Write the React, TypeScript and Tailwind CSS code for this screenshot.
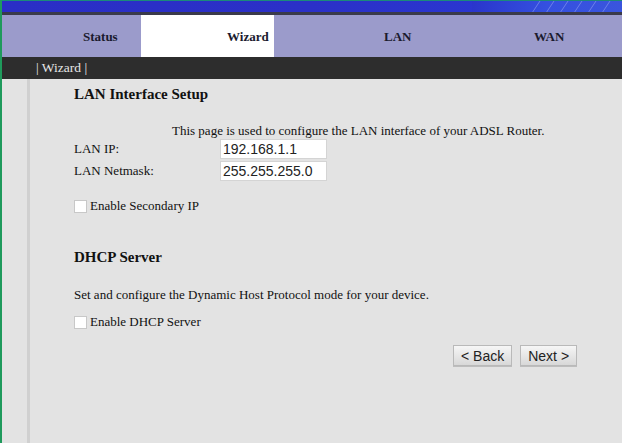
const tabs = [
  { label: 'Status', w: 'w-[139px]', pl: 'pl-[81px]', active: false },
  { label: 'Wizard', w: 'w-[133px]', pl: 'pl-[86px]', active: true },
  { label: 'LAN', w: 'w-[152px]', pl: 'pl-[110px]', active: false },
  { label: 'WAN', w: 'flex-1', pl: 'pl-[108px]', active: false },
];

const Checkbox = ({ label }: { label: string }) => (
  <label className="flex items-center h-[14px] text-[13px] text-[#111] font-['Liberation_Serif',serif]">
    <span className="w-[13px] h-[13px] bg-white border border-[#c8c8c8] mr-[3px]" />
    {label}
  </label>
);

const Field = ({ label, value }: { label: string; value: string }) => (
  <div className="flex items-center h-[22px]">
    <span className="w-[146px] text-[13px] text-[#111] font-['Liberation_Serif',serif]">{label}</span>
    <div className="w-[107px] h-[20px] bg-white border border-[#d4d4d4] pl-[2px] flex items-center text-[14px] text-[#222] font-['Liberation_Sans',Arial,sans-serif]">
      {value}
    </div>
  </div>
);

const Button = ({ children }: { children: string }) => (
  <button className="h-[21px] px-[7px] text-[14px] text-[#222] border border-[#b9b9b9] bg-gradient-to-b from-[#f6f6f6] to-[#d8d8d8] shadow-[0_1px_0_#bdbdbd] font-['Liberation_Sans',Arial,sans-serif]">
    {children}
  </button>
);

export default function App() {
  return (
    <div className="w-[622px] h-[443px] overflow-hidden bg-[#e3e3e3] border-l-2 border-[#1f9a5c] flex flex-col font-['Liberation_Serif',serif]">
      {/* top banner */}
      <div className="h-[12px] border-t border-[#1b8a7a] bg-gradient-to-r from-[#2a2ec6] via-[#2b30c8] to-[#2a3bd8] relative overflow-hidden">
        <div className="absolute right-0 top-0 h-full w-[150px] bg-gradient-to-r from-[#2a35cc] via-[#3550e0] to-[#3a55dd]" />
        <svg className="absolute right-0 top-0" width="100" height="12" viewBox="0 0 100 12">
          {[10, 24, 38, 52, 66, 80].map((x) => (
            <line key={x} x1={x} y1="12" x2={x + 8} y2="0" stroke="#8fa0f0" strokeWidth="1" opacity="0.6" />
          ))}
        </svg>
      </div>
      <div className="h-[3px] bg-[#3a3a4a]" />

      {/* tabs */}
      <div className="h-[42px] flex bg-[#9b9bcb]">
        {tabs.map((t) => (
          <div
            key={t.label}
            className={`${t.w} ${t.pl} flex items-center h-full pt-[2px] text-[13px] font-bold text-[#1a1a2e] font-['Liberation_Serif',serif] ${t.active ? 'bg-white' : ''}`}
          >
            {t.label}
          </div>
        ))}
      </div>

      {/* breadcrumb bar */}
      <div className="h-[22px] bg-[#2d2d2d] flex items-center pl-[34px] text-[13.5px] text-[#e6e6e6] font-['Liberation_Serif',serif]">
        | Wizard |
      </div>

      {/* content */}
      <div className="flex flex-1">
        <div className="w-[25px] shrink-0" />
        <div className="border-l-[3px] border-[#d0d0d0] flex-1 pl-[44px] pt-[6px] font-['Liberation_Serif',serif]">
          <h2 className="text-[15px] font-bold text-[#111] h-[18px] leading-[18px]">LAN Interface Setup</h2>

          <p className="mt-[21px] ml-[98px] text-[13px] text-[#111] h-[14px] leading-[14px]">
            This page is used to configure the LAN interface of your ADSL Router.
          </p>
          <div>
            <Field label="LAN IP:" value="192.168.1.1" />
            <Field label="LAN Netmask:" value="255.255.255.0" />
          </div>

          <div className="mt-[17px]">
            <Checkbox label="Enable Secondary IP" />
          </div>

          <h2 className="mt-[35px] text-[15px] font-bold text-[#111] h-[18px] leading-[18px]">DHCP Server</h2>

          <p className="mt-[22px] text-[13px] text-[#111] h-[14px] leading-[14px]">
            Set and configure the Dynamic Host Protocol mode for your device.
          </p>

          <div className="mt-[13px]">
            <Checkbox label="Enable DHCP Server" />
          </div>

          <div className="mt-[16px] flex gap-[8px] pl-[379px]">
            <Button>&lt; Back</Button>
            <Button>Next &gt;</Button>
          </div>
        </div>
      </div>
    </div>
  );
}
